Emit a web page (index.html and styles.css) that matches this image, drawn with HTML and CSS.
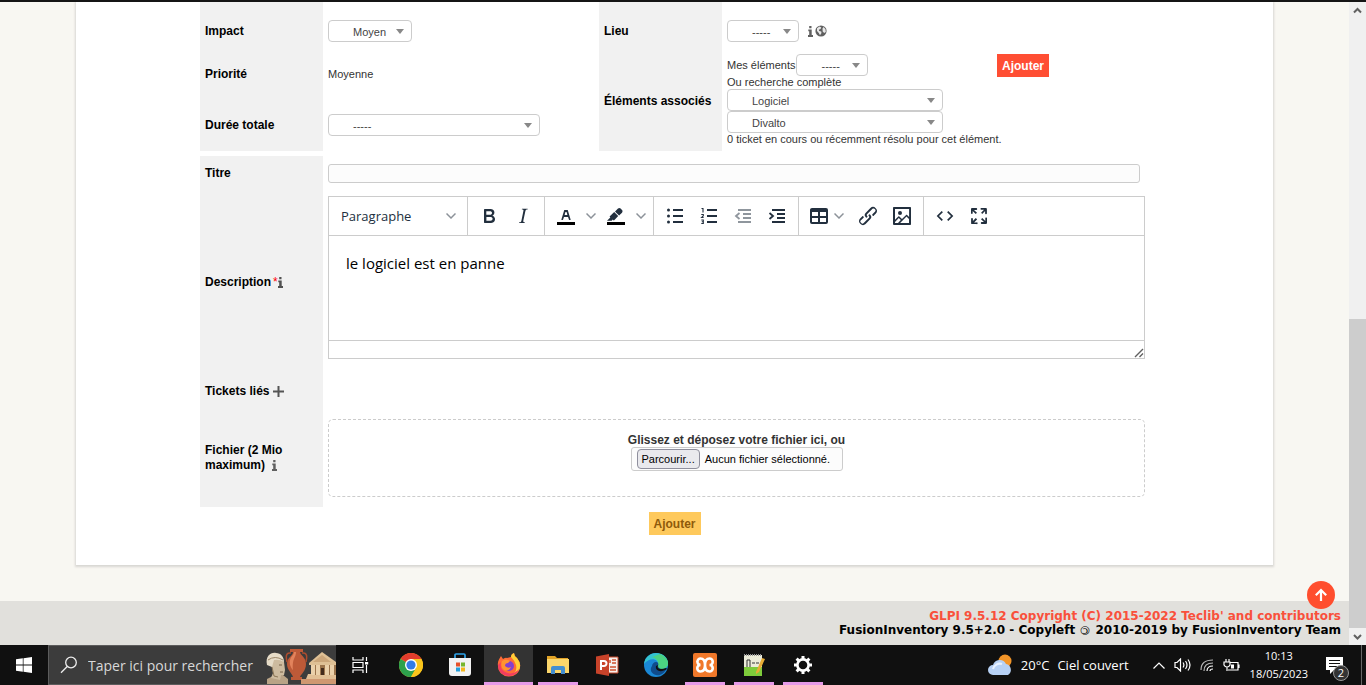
FILE: index.html
```html
<!DOCTYPE html>
<html lang="fr">
<head>
<meta charset="utf-8">
<title>GLPI - Ticket</title>
<link rel="stylesheet" href="styles.css">
</head>
<body>
<div class="screen">
  <div class="browser">
    <div class="page">
      <form class="card">
        <div class="ticket-grid">
          <label class="cell-label first" for="impact">Impact</label>
          <div class="cell first"><select id="impact" class="drop drop-mid"><option>Moyen</option></select></div>
          <label class="cell-label first" for="lieu">Lieu</label>
          <div class="cell first">
            <select id="lieu" class="drop drop-small"><option>-----</option></select>
            <span class="lieu-icons">
              <svg width="5" height="11" viewBox="0 0 5 11" fill="#606060"><path d="M1.200 0h2.300v2.300H1.200zM.3 3.500h3.400v5.500H5V11H0V9h1.200V5.300H.3z"/></svg>
              <svg width="12" height="12" viewBox="0 0 12 12"><circle cx="6" cy="6" r="5.600" fill="#606060"/><path d="M2 3.200 4.500 1.600l1.800.8-.8 1.600-1.700.8.400 1.300 2 .5.300 1.300-1.500 2.400-1.200-2.300-1.800-1.900zM7.500 3.500l1.200-1.400 1.800 2.200.3 2.600-1.600 1.200-1.500-1.700z" fill="#e8e8e8"/></svg>
            </span>
          </div>
          <div class="cell-label">Priorité</div>
          <div class="cell">Moyenne</div>
          <div class="cell-label tall">Éléments associés</div>
          <div class="cell tall">
            <div class="items">
              <div class="mine"><label for="mes">Mes éléments</label><select id="mes" class="drop drop-small"><option>-----</option></select></div>
              <label for="type">Ou recherche complète</label>
              <select id="type" class="drop drop-item"><option>Logiciel</option></select>
              <select class="drop drop-item" aria-label="Élément"><option>Divalto</option></select>
              <div>0 ticket en cours ou récemment résolu pour cet élément.</div>
            </div>
            <button type="button" class="btn btn-red">Ajouter</button>
          </div>
          <label class="cell-label total" for="duree">Durée totale</label>
          <div class="cell total"><select id="duree" class="drop drop-wide"><option>-----</option></select></div>
        </div>

        <div class="text-grid">
          <label class="cell-label" for="titre">Titre</label>
          <div class="cell"><input id="titre" class="title-input" type="text"></div>

          <label class="cell-label description" for="desc"><span>Description<span class="star">*</span><svg width="5" height="11" viewBox="0 0 5 11" fill="#505050"><path d="M1.200 0h2.300v2.300H1.200zM.3 3.500h3.400v5.500H5V11H0V9h1.200V5.300H.3z"/></svg></span></label>
          <div class="cell">
            <div class="editor">
              <div class="toolbar">
                <div class="group"><button type="button" class="tool format">Paragraphe<svg width="10" height="10" viewBox="0 0 10 10" class="chev"><path d="M.5 2.500 5 7l4.500-4.500"/></svg></button></div>
                <div class="group">
                  <button type="button" class="tool" aria-label="Gras"><svg width="24" height="24" viewBox="0 0 24 24"><path d="M7.800 19c-.3 0-.5 0-.6-.2l-.2-.5V5.700c0-.2 0-.4.200-.5l.6-.2h5c1.500 0 2.700.3 3.500 1 .7.600 1.100 1.400 1.100 2.500a3 3 0 0 1-.6 1.900c-.4.600-1 1-1.600 1.200.4.100.9.300 1.300.6s.8.700 1 1.200c.4.400.5 1 .5 1.600 0 1.300-.4 2.300-1.300 3-.8.700-2.100 1-3.800 1H7.800zm5-8.300c.6 0 1.200-.1 1.600-.5.4-.3.600-.7.600-1.300 0-1.100-.8-1.700-2.300-1.700H9.300v3.500h3.400zm.5 6c.7 0 1.300-.1 1.700-.4.400-.4.600-.9.600-1.500s-.2-1-.7-1.400c-.4-.3-1-.4-2-.4H9.400v3.800h4z" fill-rule="evenodd"/></svg></button>
                  <button type="button" class="tool" aria-label="Italique"><svg width="24" height="24" viewBox="0 0 24 24"><path d="M16.700 4.700l-.1.900h-.3c-.6 0-1 0-1.400.3-.3.300-.4.600-.5 1.100l-2.100 9.800v.6c0 .5.400.8 1.400.8h.2l-.2.800H8l.2-.8h.2c1.100 0 1.800-.5 2-1.500l2-9.800.1-.5c0-.6-.4-.8-1.400-.8h-.3l.2-.9h5.700z"/></svg></button>
                </div>
                <div class="group">
                  <button type="button" class="tool split" aria-label="Couleur du texte"><svg width="24" height="24" viewBox="0 0 24 24"><path d="M3 18h18v3H3z" fill="#000"/><path fill-rule="evenodd" d="M8.700 16h-.8a.5.500 0 0 1-.5-.6l2.700-9c.1-.3.300-.4.500-.4h2.800c.2 0 .4.100.5.400l2.700 9a.5.500 0 0 1-.5.600h-.8a.5.500 0 0 1-.4-.4l-.7-2.200c0-.3-.3-.4-.5-.4h-3.400c-.2 0-.4.100-.5.400l-.7 2.200c0 .3-.2.400-.4.400zm2.600-7.600l-.6 2a.5.500 0 0 0 .5.600h1.600a.5.500 0 0 0 .5-.6l-.6-2c0-.3-.3-.4-.5-.4h-.4c-.2 0-.4.100-.5.400z"/></svg><svg width="10" height="10" viewBox="0 0 10 10" class="chev"><path d="M.5 2.500 5 7l4.500-4.500"/></svg></button>
                  <button type="button" class="tool split" aria-label="Surlignage"><svg width="24" height="24" viewBox="0 0 24 24"><path d="M3 18h18v3H3z" fill="#000"/><path d="M7.700 16.700H3l3.300-3.300-.7-.8L10.200 8l4 4.100-4 4.200c-.2.200-.6.200-.8 0l-.6-.7-1.100 1.100zm5-7.500L11 7.400l3-2.900a2 2 0 0 1 2.600 0L18 6c.7.700.7 2 0 2.700l-2.900 2.900-1.800-1.800-.6-.6z"/></svg><svg width="10" height="10" viewBox="0 0 10 10" class="chev"><path d="M.5 2.500 5 7l4.500-4.500"/></svg></button>
                </div>
                <div class="group">
                  <button type="button" class="tool" aria-label="Liste à puces"><svg width="24" height="24" viewBox="0 0 24 24"><path d="M10 5h10v2H10zM10 11h10v2H10zM10 17h10v2H10z"/><circle cx="5.500" cy="6" r="1.500"/><circle cx="5.500" cy="12" r="1.500"/><circle cx="5.500" cy="18" r="1.500"/></svg></button>
                  <button type="button" class="tool" aria-label="Liste numérotée"><svg width="24" height="24" viewBox="0 0 24 24"><path d="M10 5h10v2H10zM10 11h10v2H10zM10 17h10v2H10z"/><path d="M4.500 4.500H6v4M4.300 10.500h2v1.300l-1.700 1.700h2M4.300 16h2v3.500h-2M4.800 17.700h1.500" fill="none" stroke="#222f3e" stroke-width="1.100"/></svg></button>
                  <button type="button" class="tool off" aria-label="Diminuer le retrait" disabled><svg width="24" height="24" viewBox="0 0 24 24"><path d="M7 5h13v2H7zM12 9h8v2h-8zM12 13h8v2h-8zM7 17h13v2H7z"/><path d="M8.500 9 5 12l3.500 3" fill="none" stroke="#222f3e" stroke-width="1.800"/></svg></button>
                  <button type="button" class="tool" aria-label="Augmenter le retrait"><svg width="24" height="24" viewBox="0 0 24 24"><path d="M7 5h13v2H7zM12 9h8v2h-8zM12 13h8v2h-8zM7 17h13v2H7z"/><path d="M4.500 9 8 12l-3.500 3" fill="none" stroke="#222f3e" stroke-width="1.800"/></svg></button>
                </div>
                <div class="group">
                  <button type="button" class="tool menu" aria-label="Tableau"><svg width="24" height="24" viewBox="0 0 24 24"><path fill-rule="evenodd" d="M19 4a2 2 0 0 1 2 2v12a2 2 0 0 1-2 2H5a2 2 0 0 1-2-2V6c0-1.100.9-2 2-2h14zM5 14v4h6v-4H5zm14 0h-6v4h6v-4zm0-6h-6v4h6V8zM5 12h6V8H5v4z"/></svg><svg width="10" height="10" viewBox="0 0 10 10" class="chev"><path d="M.5 2.500 5 7l4.500-4.500"/></svg></button>
                  <button type="button" class="tool" aria-label="Lien"><svg width="24" height="24" viewBox="0 0 24 24"><path d="M6.200 12.300a1 1 0 0 1 1.400 1.400l-2.100 2a2 2 0 1 0 2.700 2.800l4.800-4.800a1 1 0 0 0 0-1.400 1 1 0 1 1 1.400-1.300 2.900 2.900 0 0 1 0 4L9.600 20a3.900 3.900 0 0 1-5.500-5.500l2-2zm11.600-.6a1 1 0 0 1-1.400-1.400l2-2a2 2 0 1 0-2.600-2.800L11 10.300a1 1 0 0 0 0 1.400A1 1 0 1 1 9.600 13a2.900 2.900 0 0 1 0-4L14.400 4a3.900 3.900 0 0 1 5.500 5.500l-2 2z"/></svg></button>
                  <button type="button" class="tool" aria-label="Image"><svg width="24" height="24" viewBox="0 0 24 24"><path fill-rule="evenodd" d="M5 15.700l3.300-3.200c.3-.3.700-.3 1 0L12 15l4.100-4c.3-.4.800-.4 1 0l2 1.900V5H5v10.700zM5 18v1h3l2.800-2.900-2-2L5 17.900zm14-3l-2.500-2.400-6.400 6.500H19v-4zM4 3h16c.6 0 1 .4 1 1v16c0 .6-.4 1-1 1H4a1 1 0 0 1-1-1V4c0-.6.4-1 1-1zm6 8a2 2 0 1 0 0-4 2 2 0 0 0 0 4z"/></svg></button>
                </div>
                <div class="group last">
                  <button type="button" class="tool" aria-label="Code source"><svg width="24" height="24" viewBox="0 0 24 24"><path d="M9.300 7.600 4.900 12l4.400 4.300M14.700 7.600l4.400 4.400-4.400 4.300" fill="none" stroke="#222f3e" stroke-width="1.700"/></svg></button>
                  <button type="button" class="tool" aria-label="Plein écran"><svg width="24" height="24" viewBox="0 0 24 24"><path d="M15.300 10l-1.200-1.300 2.900-3h-2.300a.9.900 0 1 1 0-1.700H19c.5 0 .9.400.9.900v4.400a.9.900 0 1 1-1.800 0V7l-2.900 3zm0 4l3 3v-2.300a.9.900 0 1 1 1.700 0V19c0 .5-.4.900-.9.900h-4.400a.9.900 0 1 1 0-1.800H17l-3-2.900 1.300-1.200zM10 15.400l-2.900 3h2.300a.9.900 0 1 1 0 1.700H5a.9.900 0 0 1-.9-.9v-4.400a.9.900 0 1 1 1.800 0V17l2.900-3 1.200 1.300zM8.700 10L5.700 7v2.300a.9.900 0 0 1-1.700 0V5c0-.5.400-.9.900-.9h4.400a.9.900 0 0 1 0 1.800H7l3 2.900-1.300 1.200z"/></svg></button>
                </div>
              </div>
              <textarea id="desc" class="edit-area">le logiciel est en panne</textarea>
              <div class="status"><svg width="10" height="10" viewBox="0 0 10 10" fill="none" stroke="#606060" stroke-width="1.400"><path d="M1 9 9 1M5.500 9 9 5.500"/></svg></div>
            </div>
          </div>

          <div class="cell-label">Tickets liés<svg class="plus" width="11" height="11" viewBox="0 0 11 11"><path d="M4.500 0h2v4.500H11v2H6.500V11h-2V6.500H0v-2h4.500z" fill="#555"/></svg></div>
          <div class="cell"></div>

          <label class="cell-label" for="fichier"><span>Fichier (2 Mio maximum) <svg class="info" width="5" height="11" viewBox="0 0 5 11" fill="#606060"><path d="M1.200 0h2.300v2.300H1.200zM.3 3.500h3.400v5.500H5V11H0V9h1.200V5.300H.3z"/></svg></span></label>
          <div class="cell">
            <div class="dropzone">
              <b>Glissez et déposez votre fichier ici, ou</b>
              <label class="file"><input id="fichier" class="file-input" type="file"><span class="browse">Parcourir...</span>Aucun fichier sélectionné.</label>
            </div>
          </div>
        </div>
        <div class="submit"><button type="button" class="btn btn-yellow">Ajouter</button></div>
      </form>
      <footer class="footer">
        <a class="copyright" href="#">GLPI 9.5.12 Copyright (C) 2015-2022 Teclib' and contributors</a>
        <div>FusionInventory 9.5+2.0 - Copyleft <span class="copyleft">©</span> 2010-2019 by FusionInventory Team</div>
        <button type="button" class="to-top" aria-label="Haut de page"><svg width="14" height="14" viewBox="0 0 14 14" fill="none" stroke="#fff" stroke-width="2.200"><path d="M7 13V2M1.800 7.200 7 2l5.200 5.200"/></svg></button>
      </footer>
    </div>
    <div class="scrollbar">
      <svg width="17" height="17" viewBox="0 0 17 17"><path d="m5 10.500 3.500-3.500 3.500 3.500"/></svg>
      <div class="track"></div>
      <div class="thumb"></div>
      <svg width="17" height="17" viewBox="0 0 17 17"><path d="M5 7l3.500 3.500L12 7"/></svg>
    </div>
  </div>

  <div class="taskbar">
    <button class="start" aria-label="Démarrer"><svg width="16" height="16" viewBox="0 0 16 16" fill="#fff"><path d="M0 2.300 6.800 1.300v6.300H0zM7.500 1.200 16 0v7.600H7.500zM0 8.400h6.800v6.300L0 13.700zM7.500 8.400H16V16l-8.500-1.200z"/></svg></button>
    <div class="search">
      <svg width="18" height="18" viewBox="0 0 18 18" fill="none" stroke="#eee" stroke-width="1.300"><circle cx="11" cy="6.500" r="5.300"/><path d="M7.200 10.500 1 16.800"/></svg>
      <input class="search-input" type="text" placeholder="Taper ici pour rechercher" aria-label="Taper ici pour rechercher">
      <svg width="71" height="36" viewBox="0 0 71 36">
        <path d="M2 36V31l8-4h8l5 4v5z" fill="#b9a386"/>
        <path d="M6 14l2 11-2 5 9 2 1-5h3l1-5-1-8-5-6-8 1z" fill="#cdbb9f"/>
        <path d="M2 17C0 8 6 4 11 5c5 0 8 4 8 9q-5-3-10-2l-2 7z" fill="#e6dcc8"/>
        <path d="M3 12q7-5 15 0" stroke="#9a8567" stroke-width="1" fill="none"/><path d="M14 17h3M15 24h3" stroke="#786248"/><path d="M7 19l2 9 4 1" stroke="#8b7657" fill="none"/>
        <path d="M25 1h13v3h-3c0 3 6 5 6 12 0 7-5 10-6 13h2v3H26v-3h2c-1-4-6-7-6-13 0-7 6-8 6-12h-3z" fill="#bd5a38"/>
        <path d="M26 5c-6-1-5 5-4 9M37 5c6-1 5 5 4 9" stroke="#ad4c2e" stroke-width="1.500" fill="none"/>
        <path d="M25 12c1-4 4-5 4-8h2c0 6-4 6-3 18-2-2-4-6-3-10z" fill="#e2835c"/>
        <path d="M36 36v-5h35v5z" fill="#cf9871"/><path d="M43 26h28v5H41z" fill="#e1bf95"/>
        <path d="M48 15h23v12H48z" fill="#9b744c"/><path d="M44 15 57 4l14 10v3H44z" fill="#dec095"/><path d="m48 14 9-7 9 7z" fill="#cba67a"/>
        <path d="M46 17h4v10h-4zM51 17h4v10h-4zM60 17h4v10h-4zM65 17h4v10h-4z" fill="#ead0aa"/><path d="M56 20h3v7h-3z" fill="#432b1c"/>
      </svg>
    </div>
    <button class="app view" aria-label="Applications actives"><svg width="17" height="16" viewBox="0 0 17 16" fill="none" stroke="#fff" stroke-width="1.200"><path d="M1 0v3h10V0M1 16v-3h10v3M1 5.500h10v5H1zM14.500 0v4M14.500 8v8"/><path d="M13 5h3.200v2.500H13z" fill="#fff" stroke="none"/></svg></button>
    <button class="app" aria-label="Chrome"><svg width="24" height="24" viewBox="0 0 24 24"><circle cx="12" cy="12" r="12" fill="#f8bd16"/><path d="M12 12 1.600 6A12 12 0 0 1 22.400 6z" fill="#e23c2d"/><path d="M12 12 1.600 6A12 12 0 0 0 12 24l5-9z" fill="#2da14c"/><path d="M12 6h10.400A12 12 0 0 1 12 24l5.200-9z" fill="#fac51c"/><circle cx="12" cy="12" r="6" fill="#fff"/><circle cx="12" cy="12" r="4.600" fill="#327be8"/></svg></button>
    <button class="app" aria-label="Microsoft Store"><svg width="24" height="24" viewBox="0 0 24 24"><path d="M7 6V2q0-1 1-1h8q1 0 1 1v4" fill="none" stroke="#2ea2e7" stroke-width="1.700"/><path d="M1 5h22v15q0 3-3 3H4q-3 0-3-3z" fill="#f2f2f2"/><path d="M8 9.500h4v4H8z" fill="#e75129"/><path d="M13 9.500h4v4h-4z" fill="#76b62d"/><path d="M8 14.500h4v4H8z" fill="#239edb"/><path d="M13 14.500h4v4h-4z" fill="#f4b71d"/></svg></button>
    <button class="app current" aria-label="Firefox"><svg width="24" height="24" viewBox="0 0 24 24"><path d="M1 13C0 8 3 5 4 3l2 3q3-2 4-1l4-1q0-3 3-4 0 3 3 5 4 5 3 9a11 10 0 0 1-22-1z" fill="#ff6b37"/><path d="M14 4q0-3 3-4 0 3 3 5 5 6 2 12-4 6-11 5 10-1 8-10-1-4-5-8z" fill="#ffce36"/><path d="M1 12c0 7 5 11 11 11 5 0 9-3 10-7-3 4-9 6-14 3-4-2-5-6-4-10z" fill="#f23d61"/><circle cx="12" cy="13" r="5" fill="#8440cf"/><path d="M5 8q4-3 8 0l-2 2q-3 0-3 3 3 3 6 1-2 5-7 3-4-3-2-9z" fill="#ff9431"/></svg></button>
    <button class="app open" aria-label="Explorateur"><svg width="22" height="20" viewBox="0 0 22 20"><path d="M0 2V1h8l2 2h11v3H0z" fill="#e1a327"/><path d="M0 4h22v14H0z" fill="#fbd66b"/><path d="M4 19v-6q0-2 2-2h10q2 0 2 2v6h-4v-4H8v4z" fill="#448ecf"/></svg></button>
    <button class="app" aria-label="PowerPoint"><svg width="24" height="24" viewBox="0 0 24 24"><path d="M12 4h11v16H12z" fill="#f5f0ed" stroke="#c94a2c"/><path d="M17 7h4M17 10h4M15 14h6M15 17h6M15 7v3" stroke="#d04f2c" stroke-width="1.500"/><path d="M1 3.500 14 1v22L1 20.500z" fill="#c8432a"/><path d="M6 17V8h3a2.500 2.500 0 0 1 0 5H6" fill="none" stroke="#fff" stroke-width="2"/></svg></button>
    <button class="app" aria-label="Edge"><svg width="24" height="24" viewBox="0 0 24 24"><circle cx="12" cy="12" r="12" fill="#1a88d6"/><path d="M0 11C1 4 6 0 12 0c8 0 12 6 12 10 0 4-3 6-7 6-3 0-4-2-3-4 1-7-9-8-14-1z" fill="#34c3d1"/><path d="M16 1c5 2 8 6 8 9 0 4-3 6-7 6-3 0-4-2-3-4 1-4-2-7-6-8z" fill="#4bd282"/><path d="M8 13c0-2 2-4 4-4s3 2 2 4c0 3 5 4 9 2-3 6-7 8-11 7s-7-5-4-9z" fill="#104c8c"/><path d="M14 12c-2 4 3 5 8 3l1 1c-6 4-12 2-11-3z" fill="#101010"/></svg></button>
    <button class="app open" aria-label="XAMPP"><svg width="24" height="24" viewBox="0 0 24 24"><rect width="24" height="24" rx="2" fill="#f0782a"/><path d="M4.500 8.500a3 3 0 0 1 3-3q4.500 0 4.500 6.500T16.500 18.500a3.200 3.200 0 0 0 0-6.500 3.200 3.200 0 0 0 0-6.500Q12 5.500 12 12T7.500 18.500a3.200 3.200 0 0 1 0-6.500 3 3 0 0 1-3-3.500z" fill="none" stroke="#fff" stroke-width="2.600"/></svg></button>
    <button class="app open" aria-label="Notepad++"><svg width="22" height="24" viewBox="0 0 22 24"><path d="M1 2h18v21H1z" fill="#ececd9"/><path d="M1 14h18v9H1z" fill="#7ecb3b"/><path d="M1 2h18" stroke="#999" stroke-width="2" stroke-dasharray="1 1"/><path d="M4 14V7h3v7M9 10h3M13 10h3" stroke="#333" fill="none"/><path d="m13 19 6-14 3 1-6 13-3 2z" fill="#e8ac35"/></svg></button>
    <button class="app open" aria-label="Paramètres"><svg width="20" height="20" viewBox="0 0 20 20" fill="none" stroke="#fff"><circle cx="10" cy="10" r="5.600" stroke-width="2.600"/><path d="M10 1v3M10 16v3M1 10h3M16 10h3M3.600 3.600l2.200 2.200M14.200 14.200l2.200 2.200M16.400 3.600l-2.200 2.200M5.800 14.200l-2.200 2.200" stroke-width="3"/></svg></button>
    <div class="weather"><svg width="25" height="22" viewBox="0 0 25 22"><circle cx="17" cy="7" r="6.500" fill="#f39528"/><path d="M5 21a5 5 0 0 1 0-10 7 7 0 0 1 13-1 6 6 0 0 1 2 11z" fill="#b7d1f5"/><path d="M5 15a7 7 0 0 1 9-5" stroke="#e8f1ff" stroke-width="2" fill="none"/></svg><span>20°C</span><span>Ciel couvert</span></div>
    <div class="tray">
      <svg width="12" height="7" viewBox="0 0 12 7"><path d="m.5 6.500 5.500-5.500 5.500 5.500"/></svg>
      <svg width="17" height="14" viewBox="0 0 17 14"><path d="M1 4.500h2L6.500 1v12L3 9.500H1zM9 4.500q1.800 2.500 0 5M11.500 3q3 4 0 8M14 1.500q4 5.500 0 11"/></svg>
      <svg width="14" height="14" viewBox="0 0 14 14"><g opacity=".7"><path d="M1 12Q1 2 13 2M4 13Q4 5 13 5"/></g><path d="M7 13q0-5 6-5M10 13q0-2 3-2"/></svg>
      <svg width="17" height="13" viewBox="0 0 17 13"><path d="M7 3.500h8v7.500H5M16 5.500v3.500M3 0v3M6 0v3M1 3h6v3q-1 2-3 2T1 6zM4 8v4"/><path d="M8 5.500h3v4H8z" fill="#fff" stroke="none"/></svg>
    </div>
    <div class="clock"><div>10:13</div><div>18/05/2023</div></div>
    <button class="notice" aria-label="Notifications"><svg width="17" height="17" viewBox="0 0 17 17"><path d="M0 0h17v13H8l-4 4v-4H0z" fill="#fff"/><path d="M3 3.500h11M3 6.500h11M3 9.500h8" stroke="#101010"/></svg><span class="count">2</span></button>
  </div>
</div>
</body>
</html>
```
FILE: styles.css
```css
* { box-sizing: border-box; }
body {
  margin: 0;
  font-family: "Liberation Sans", Arial, sans-serif;
  font-size: 11px;
  line-height: 14px;
  color: #333;
}
button, select, input, textarea { font: inherit; color: inherit; margin: 0; }
button { cursor: pointer; }
svg { flex: none; }

.screen { height: 100vh; display: flex; flex-direction: column; border-top: 2px solid #151515; overflow: hidden; }
.browser { flex: 1; min-height: 0; display: flex; }
.page { flex: 1; min-width: 0; background: #f8f7f2; overflow: hidden; display: flex; flex-direction: column; }

.card {
  margin: 0 76px 36px;
  padding: 0 124px 30px;
  background: #fff;
  box-shadow: 0 1px 2px 1px #d8d7d3;
}
.ticket-grid { display: grid; grid-template-columns: 123px 276px 123px 1fr; grid-template-rows: 50px 44px 55px; }
.text-grid { display: grid; grid-template-columns: 123px 1fr; grid-template-rows: 34px auto 34px 99px; margin-top: 5px; }
.cell-label {
  display: flex;
  align-items: center;
  padding: 0 5px;
  background: #f1f1f1;
  color: #000;
  font-size: 12px;
  line-height: 15px;
  font-weight: bold;
}
.cell { display: flex; align-items: center; padding: 0 5px; min-width: 0; }
.first { padding-top: 8px; }
.total { padding-top: 3px; }
.tall { grid-row: span 2; }
.cell.tall { align-items: flex-start; padding-top: 2px; }
.star { color: #f00; font-weight: normal; margin-left: 2px; }
.cell-label svg { vertical-align: -2px; }
.plus { margin-left: 3px; }
.info { margin-left: 4px; }

.drop {
  appearance: none;
  height: 22px;
  padding: 2px 20px 0 24px;
  border: 1px solid #ccc;
  border-radius: 4px;
  color: #444;
  background: #fff url("data:image/svg+xml,%3Csvg xmlns='http://www.w3.org/2000/svg' width='8' height='5'%3E%3Cpath d='M0 0h8L4 5z' fill='%23888'/%3E%3C/svg%3E") no-repeat right 7px center;
}
.drop-small { width: 72px; }
.drop-mid { width: 84px; }
.drop-wide { width: 212px; }
.drop-item { width: 216px; }
.lieu-icons { display: flex; align-items: center; gap: 2px; margin-left: 9px; }
.items { display: flex; flex-direction: column; align-items: flex-start; width: 270px; line-height: 13px; white-space: nowrap; }
.mine { display: flex; align-items: center; gap: 1px; }
.btn { height: 23px; padding: 0 5px; border: 0; font-size: 12px; font-weight: bold; }
.btn-red { background: #ff4e33; color: #fff; }
.btn-yellow { background: #fec95c; color: #8f5a0a; }

.title-input { flex: 1; height: 19px; margin-right: 5px; border: 1px solid #ccc; border-radius: 3px; background: #fcfcfc; }
.text-grid > .cell { padding-right: 4px; }
.editor { flex: 1; min-width: 0; margin: 6px 0 15px; border: 1px solid #ccc; background: #fff; }
.toolbar { display: flex; height: 39px; border-bottom: 1px solid #ccc; }
.group { display: flex; align-items: center; padding: 0 4px; border-right: 1px solid #ccc; }
.last { border-right: 0; }
.tool { display: flex; align-items: center; justify-content: center; width: 34px; height: 34px; padding: 0; border: 0; background: none; color: #222f3e; fill: #222f3e; }
.split { width: 50px; gap: 8px; padding-left: 2px; }
.menu { width: 48px; gap: 3px; justify-content: flex-start; padding-left: 4px; }
.off { opacity: .5; }
.format { width: 130px; padding: 0 7px 0 8px; justify-content: space-between; font: 13px/20px "Open Sans", "Noto Sans", sans-serif; }
.chev { fill: none; stroke: #8c9299; stroke-width: 1.5; }
.edit-area {
  display: block;
  width: 100%;
  height: 104px;
  padding: 16px 17px;
  border: 0;
  resize: none;
  outline: 0;
  color: #000;
  font: 15px/22px "Open Sans", "Noto Sans", sans-serif;
}
.status { display: flex; justify-content: flex-end; align-items: flex-end; height: 18px; border-top: 1px solid #ccc; }

.dropzone {
  flex: 1;
  height: 78px;
  display: flex;
  flex-direction: column;
  align-items: center;
  justify-content: center;
  padding-bottom: 10px;
  border: 1px dashed #ccc;
  border-radius: 5px;
}
.dropzone b { font-size: 12px; line-height: 13px; }
.file { display: flex; align-items: center; width: 212px; height: 24px; padding: 0 5px; gap: 5px; border: 1px solid #ccc; border-radius: 3px; background: #fcfcfc; color: #000; white-space: nowrap; }
.file-input { position: absolute; width: 1px; height: 1px; opacity: 0; }
.browse { padding: 1px 4px; border: 1px solid #8f8f9d; border-radius: 4px; background: #e9e9ed; line-height: 16px; }
.submit { display: flex; justify-content: center; padding-top: 5px; }

.footer {
  position: relative;
  flex: 1;
  padding: 8px 8px 0;
  background: #e1e0dc;
  color: #000;
  text-align: right;
  font: bold 12px/14px "DejaVu Sans", Verdana, sans-serif;
  white-space: nowrap;
}
.copyright { color: #f9503b; text-decoration: none; }
.copyleft { display: inline-block; transform: rotate(180deg); font-weight: normal; }
.to-top { position: absolute; right: 14px; top: -20px; width: 28px; height: 28px; display: flex; align-items: center; justify-content: center; padding: 0; border: 0; border-radius: 50%; background: #ff4e2e; }

.scrollbar { display: flex; flex-direction: column; width: 17px; background: #f0f0f0; fill: none; stroke: #606060; stroke-width: 2; }
.track { flex: 300; }
.thumb { flex: 309; background: #cdcdcd; }

.taskbar { flex: none; display: flex; height: 40px; background: #101010; color: #fff; font-family: "Open Sans", "Noto Sans", sans-serif; border-right: 4px solid #101010; }
.start { display: flex; align-items: center; justify-content: center; width: 48px; padding: 0; border: 0; background: none; }
.search { display: flex; align-items: center; width: 288px; padding-left: 11px; border: 1px solid #5c5c5c; border-right: 0; background: #3c3c3c; }
.search > svg:last-child { align-self: flex-end; }
.search-input { flex: 1; min-width: 0; padding: 1px 0 0 10px; border: 0; background: none; font-size: 14px; line-height: 20px; }
.search-input::placeholder { color: #d8d8d8; opacity: 1; }
.app { display: flex; align-items: center; justify-content: center; width: 49px; padding: 0; border: 0; background: none; }
.view { margin-right: 1px; }
.current { background: linear-gradient(#e59ae8, #e59ae8) bottom / 100% 3px no-repeat #333; }
.open { background: linear-gradient(#e59ae8, #e59ae8) bottom / 40px 3px no-repeat; }
.weather { display: flex; align-items: center; gap: 8px; margin-left: auto; margin-right: 24px; font-size: 13px; white-space: nowrap; }
.tray { display: flex; align-items: center; gap: 9px; margin-right: 10px; fill: none; stroke: #fff; stroke-width: 1.2; }
.clock { display: flex; flex-direction: column; justify-content: center; text-align: center; line-height: 18px; }
.notice { position: relative; display: flex; align-items: center; justify-content: center; width: 54px; padding: 0; border: 0; border-right: 1px solid #666; background: none; }
.count { position: absolute; right: 12px; bottom: 4px; width: 16px; height: 16px; border: 1px solid #999; border-radius: 50%; background: #333; color: #fff; font-size: 11px; line-height: 14px; }
```
